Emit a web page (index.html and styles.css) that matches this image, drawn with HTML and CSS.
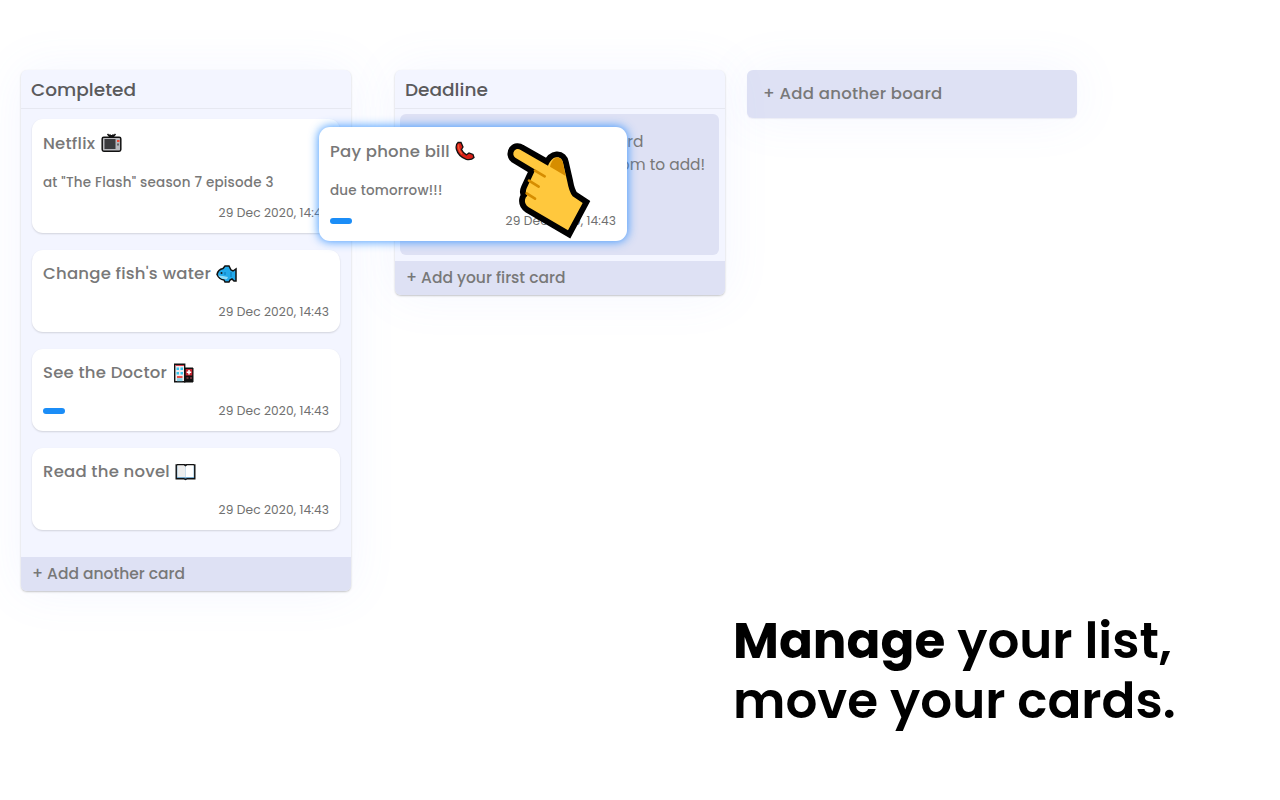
FILE: index.html
```html
<!DOCTYPE html>
<html lang="en">
<head>
<meta charset="utf-8">
<title>Boards</title>
<link rel="stylesheet" href="styles.css">
</head>
<body>
<main class="page">
  <div class="boards">
    <section class="board board-completed">
      <h2 class="board-title">Completed</h2>
      <div class="cards">
        <article class="card card-tall">
          <h3 class="card-title"><span>Netflix</span>
            <svg class="icon" viewBox="0 0 21 20"><path d="M6.500 1l3 3.500M14.500 1l-3 3.500M8.500 1.500l2 2 2-2" fill="none" stroke="#111" stroke-width="1.500"/><rect x="1.200" y="4.200" width="18.600" height="14" rx="1.600" fill="#b9b9bd" stroke="#111" stroke-width="1.500"/><path d="M3.500 6h11v10h-11z" fill="#3b3b3e"/><path d="M16 7h2.500v2H16z" fill="#ef4a36"/><path d="M16 10.500h2v2h-2z" fill="#68686c"/></svg>
          </h3>
          <p class="card-text">at "The Flash" season 7 episode 3</p>
          <div class="card-foot"><time>29 Dec 2020, 14:43</time></div>
        </article>
        <article class="card">
          <h3 class="card-title"><span>Change fish's water</span>
            <svg class="icon" viewBox="0 0 21 20"><path d="M1 10.500Q2 5.500 7 4.500L9 2h4l2 4 2 1 3-2v12h-2l-2-2-2 1-1 2H9l-1-2q-5-1-7-5.500z" fill="#22a9ea" stroke="#111" stroke-width="1.500"/><path d="M2 11.500q5 0 10 1.500l-1 2q-6 1-9-3.500z" fill="#8fdcf8"/><circle cx="5.500" cy="9" r="1" fill="#111"/><path d="M9 8v3M15 8v5" stroke="#0877b6"/></svg>
          </h3>
          <div class="card-foot"><time>29 Dec 2020, 14:43</time></div>
        </article>
        <article class="card">
          <h3 class="card-title"><span>See the Doctor</span>
            <svg class="icon" viewBox="0 0 21 20"><path d="M11 5h9v14h-9z" fill="#111" stroke="#111"/><path d="M1.700 1.200h10v17.600h-10z" fill="#f0edf0" stroke="#111" stroke-width="1.400"/><path d="M2.400 2h8.600v1H2.400z" fill="#d73a48"/><path d="M3.500 4.500H6V7H3.500zM7.500 4.500H10V7H7.500zM3.500 9H6v2.500H3.500zM7.500 9H10v2.500H7.500z" fill="#35c7ef"/><path d="M4 13h5.500v2H4z" fill="#e95048"/><path d="M4 15.200h5.500v3H4z" fill="#8bd2e6"/><path d="M12.700 6h6.500v6.500h-6.500z" fill="#c52632"/><path d="M16 7v4.500M13.700 9.200h4.500" stroke="#fff" stroke-width="1.500"/><path d="M13.500 14h2v2h-2zM17 14h2v2h-2z" fill="#6a3038"/></svg>
          </h3>
          <div class="card-foot"><i class="label"></i><time>29 Dec 2020, 14:43</time></div>
        </article>
        <article class="card">
          <h3 class="card-title"><span>Read the novel</span>
            <svg class="icon" viewBox="0 0 21 20"><path d="M1.200 3V16.700h7.500l1.800.8 1.800-.8h7.500V3z" fill="#4a90c0" stroke="#111" stroke-width="1.400"/><path d="M2.300 3H9.500l1 1V15.500l-1-.3H2.300z" fill="#eee"/><path d="M10.500 4l1-1h7.200v12.200h-7.200l-1 .3z" fill="#fff"/><path d="M2 2.700h7.200l1.300 1 1.300-1H19" fill="none" stroke="#111" stroke-width="1.200"/></svg>
          </h3>
          <div class="card-foot"><time>29 Dec 2020, 14:43</time></div>
        </article>
      </div>
      <div class="board-add">+ Add another card</div>
    </section>

    <section class="board board-deadline">
      <h2 class="board-title">Deadline</h2>
      <div class="empty">
        <p>You don't have a card</p>
        <p>Click the button at the bottom to add!</p>
      </div>
      <div class="board-add">+ Add your first card</div>
      <article class="card card-tall card-dragged">
        <h3 class="card-title"><span>Pay phone bill</span>
          <svg class="icon" viewBox="0 0 21 20"><path d="M3 1.500Q.5 3.500 1.300 8q2 7.500 10 10.300 5 1 7.700-1.800l-1-3-4-1.500-2.500 1.800Q8 12 6.500 8.500L8 6 6 1.500z" fill="#d91f16" stroke="#111" stroke-width="1.300"/><path d="M3.500 3.500Q3 9 7 13" fill="none" stroke="#f45a36" stroke-width="1.300"/></svg>
        </h3>
        <p class="card-text">due tomorrow!!!</p>
        <div class="card-foot"><i class="label"></i><time>29 Dec 2020, 14:43</time></div>
        <svg class="hand" viewBox="0 0 330 360">
          <path d="M46 83C39 78 38 69 43 62C48 56 56 56 62 60L144 107C150 94 157 83 170 82C181 81 187 89 189 98L202 155Q207 184 218 199L248 219L204 301L86 232Q73 222 75 209Q76 202 82 197Q74 188 80 175L106 119Z" fill="#ffc83d" stroke="#000" stroke-width="35" stroke-linejoin="miter" paint-order="stroke"/>
          <path d="M150 110C154 94 160 84 171 83C181 82 187 90 189 99L197 138Z" fill="#d68d00"/>
          <path d="M105 122l29 17M87 152l29 18M80 190l25 16" stroke="#d68d00" stroke-width="8" stroke-linecap="round"/>
        </svg>
      </article>
    </section>

    <div class="new-board">+ Add another board</div>
  </div>

  <h1 class="headline"><b>Manage</b> your list,<br>move your cards.</h1>
</main>
</body>
</html>
```
FILE: styles.css
```css
* { box-sizing: border-box; }
body { margin: 0; background: #fff; font-family: Poppins, Inter, "Liberation Sans", sans-serif; font-weight: 500; color: #787878; }
h1, h2, h3, p { margin: 0; font-weight: 500; }
.page { width: 1280px; height: 800px; padding: 70px 0 0 21px; overflow: hidden; display: flex; flex-direction: column; }
.boards { display: flex; align-items: flex-start; height: 541px; flex: none; }
.board, .new-board { width: 330px; border-radius: 6px; flex: none; box-shadow: 0 1px 2px rgba(0,0,0,.22), 0 0 50px rgba(110,135,255,.08); }
.board { background: #f3f5ff; position: relative; display: flex; flex-direction: column; white-space: nowrap; }
.board-completed { height: 521px; margin-right: 44px; }
.board-deadline { height: 225px; margin-right: 22px; z-index: 1; }
.board-title { height: 39px; line-height: 39px; padding-left: 10px; font-size: 18.500px; color: #5a5a5c; border-bottom: 1px solid #e6e8f1; }
.cards { padding: 10px 11px 0; display: flex; flex-direction: column; gap: 16.5px; flex: 1; }
.card { width: 308px; height: 82.500px; border-radius: 11px; background: #fff; padding: 11px 11px 9px; display: flex; flex-direction: column; box-shadow: 0 1px 2px rgba(0,0,0,.14); }
.card-tall { height: 114px; }
.card-title { height: 26px; display: flex; align-items: center; gap: 5.500px; font-size: 16.5px; letter-spacing: .22px; }
.icon { width: 21px; height: 20px; flex: none; }
.card-text { font-size: 13.500px; letter-spacing: .22px; line-height: 20px; margin-top: 17px; }
.card-foot { display: flex; align-items: center; margin-top: auto; height: 22px; font-size: 12.200px; font-weight: 400; color: #707070; }
.card-foot time { margin-left: auto; letter-spacing: .09px; }
.label { width: 22px; height: 6px; border-radius: 3px; background: #1b8df7; }
.board-add { height: 34px; line-height: 34px; margin-top: auto; padding-left: 11px; background: #dee1f4; border-radius: 0 0 6px 6px; font-size: 15.500px; }
.empty { margin: 5px 6px 0 5px; height: 141px; padding-top: 16px; border-radius: 6px; background: #dee1f4; text-align: center; font-size: 15.400px; line-height: 23px; }
.empty p { font-weight: 400; }
.card-dragged { position: absolute; left: -76px; top: 57px; box-shadow: 0 0 10px 1px rgba(35,137,255,.8); }
.hand { position: absolute; left: 181px; top: 3px; width: 110px; height: 120px; overflow: visible; }
.new-board { height: 48px; line-height: 48px; padding-left: 16px; background: #dee1f4; font-size: 16.5px; letter-spacing: .25px; box-shadow: 0 1px 1px rgba(80,80,140,.08), 0 0 50px rgba(110,135,255,.08); }
.headline { margin-left: 712px; color: #000; font-size: 50px; line-height: 60px; white-space: nowrap; font-weight: 600; }
.headline b { font-weight: 700; }
```
